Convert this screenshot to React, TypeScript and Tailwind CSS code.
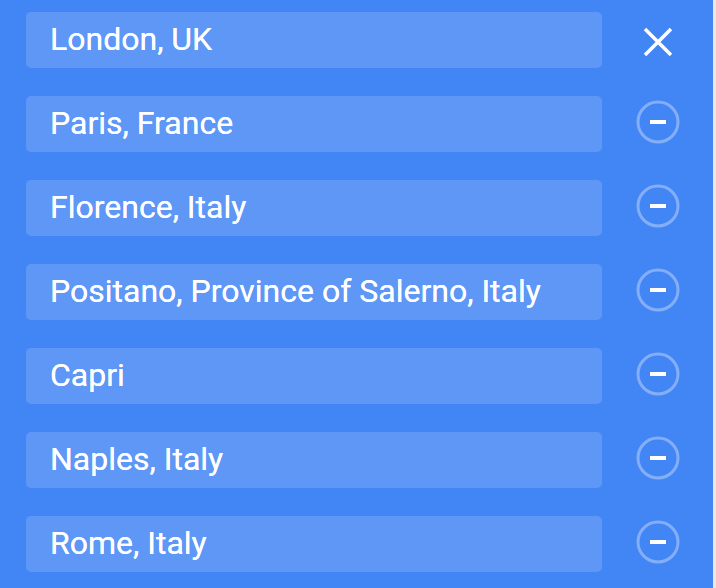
import React from 'react';

const places = [
  'London, UK',
  'Paris, France',
  'Florence, Italy',
  'Positano, Province of Salerno, Italy',
  'Capri',
  'Naples, Italy',
  'Rome, Italy',
];

const CloseIcon = () => (
  <svg width="30" height="30" viewBox="0 0 30 30" fill="none" className="mt-[3px]">
    <path d="M2 2 L28 28 M28 2 L2 28" stroke="white" strokeWidth="3.5" />
  </svg>
);

const RemoveIcon = () => (
  <svg width="44" height="44" viewBox="0 0 44 44" fill="none" className="mb-[4px]">
    <circle cx="22" cy="22" r="20" stroke="rgba(255,255,255,0.35)" strokeWidth="3" />
    <rect x="14" y="20" width="16" height="4" fill="white" />
  </svg>
);

export default function App() {
  return (
    <div className="flex h-[588px] w-[716px] overflow-hidden">
      <div className="flex flex-1 flex-col gap-[28px] bg-[#4285f4] pl-[26px] pt-[12px] font-['Roboto',sans-serif]">
        {places.map((place, i) => (
          <div key={place} className="flex items-center">
            <div className="flex h-[56px] w-[576px] items-center rounded-[5px] bg-[#5e97f6] pb-[3px] pl-[24px] text-[32px] text-white [text-shadow:0_0_0.4px_white]">
              {place}
            </div>
            <div className="flex w-[111px] items-center justify-center self-stretch">
              {i === 0 ? <CloseIcon /> : <RemoveIcon />}
            </div>
          </div>
        ))}
      </div>
      <div className="w-[3px] bg-[#ece8e0]" />
    </div>
  );
}
